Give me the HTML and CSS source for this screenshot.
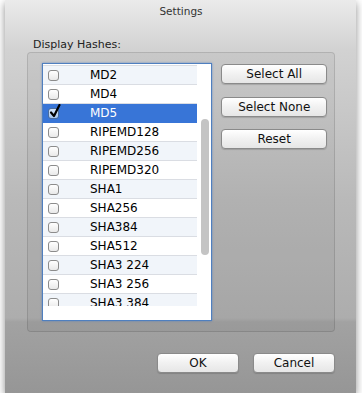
FILE: index.html
```html
<!DOCTYPE html>
<html lang="en">
<head>
  <meta charset="UTF-8">
  <title>Settings</title>
  <link rel="stylesheet" href="styles.css">
</head>
<body>
  <div class="window">
    <div class="titlebar">Settings</div>
    <div class="label">Display Hashes:</div>

    <div class="group">
      <div class="list">
        <div class="viewport">
          <div class="rows">
            <div class="row"></div>
            <div class="row alt"><span class="check"></span><span class="name">MD2</span></div>
            <div class="row"><span class="check"></span><span class="name">MD4</span></div>
            <div class="row selected">
              <span class="check checked">
                <svg viewBox="0 0 12 14" width="12" height="14"><path d="M2 8.5 L5 12 L10.5 1" fill="none" stroke="#000" stroke-width="2.2" stroke-linecap="round" stroke-linejoin="round"/></svg>
              </span>
              <span class="name">MD5</span>
            </div>
            <div class="row"><span class="check"></span><span class="name">RIPEMD128</span></div>
            <div class="row alt"><span class="check"></span><span class="name">RIPEMD256</span></div>
            <div class="row"><span class="check"></span><span class="name">RIPEMD320</span></div>
            <div class="row alt"><span class="check"></span><span class="name">SHA1</span></div>
            <div class="row"><span class="check"></span><span class="name">SHA256</span></div>
            <div class="row alt"><span class="check"></span><span class="name">SHA384</span></div>
            <div class="row"><span class="check"></span><span class="name">SHA512</span></div>
            <div class="row alt"><span class="check"></span><span class="name">SHA3 224</span></div>
            <div class="row"><span class="check"></span><span class="name">SHA3 256</span></div>
            <div class="row alt"><span class="check"></span><span class="name">SHA3 384</span></div>
          </div>
        </div>
        <div class="scroller"><div class="thumb"></div></div>
      </div>

      <div class="side-buttons">
        <button class="btn">Select All</button>
        <button class="btn">Select None</button>
        <button class="btn">Reset</button>
      </div>
    </div>

    <div class="footer">
      <button class="btn wide">OK</button>
      <button class="btn wide">Cancel</button>
    </div>
  </div>
</body>
</html>
```

FILE: styles.css
```css
* {
  box-sizing: border-box;
}

body {
  margin: 0;
  background: #ffffff;
  font-family: "DejaVu Sans", Arial, sans-serif;
  color: #111;
}

.window {
  width: 351px;
  height: 393px;
  margin-left: 5px;
  padding: 0 21px 0 22px;
  display: flex;
  flex-direction: column;
  background: linear-gradient(to bottom, #ebebeb 0px, #d2d2d2 50px, #b9b9b9 200px, #adadad 318px, #a2a2a2 322px, #969696 393px);
  box-shadow: 0 3px 8px rgba(0, 0, 0, 0.45);
}

.titlebar {
  height: 22px;
  line-height: 22px;
  text-align: center;
  font-size: 10.5px;
  color: #333;
}

.label {
  margin-top: 16px;
  height: 14px;
  line-height: 14px;
  padding-left: 6px;
  font-size: 11px;
  color: #222;
}

.group {
  height: 280px;
  display: flex;
  gap: 9px;
  padding: 11px 7px 0 15px;
  background: rgba(0, 0, 0, 0.04);
  border: 1px solid rgba(0, 0, 0, 0.12);
  border-radius: 4px;
}

.list {
  width: 171px;
  height: 258px;
  margin: -1px 0 0 -1px;
  display: flex;
  background: #ffffff;
  border: 1px solid #4f7fbf;
  box-shadow: 0 0 2px rgba(70, 120, 200, 0.7);
}

.viewport {
  flex: 1;
  height: 242px;
  overflow: hidden;
}

.rows {
  margin-top: -17px;
}

.row {
  height: 19px;
  display: flex;
  align-items: center;
  border-bottom: 1px solid #dadde3;
  background: #ffffff;
  font-size: 12px;
  color: #000;
}

.row.alt {
  background: #f1f5fa;
}

.row.selected {
  background: #3875d7;
  color: #ffffff;
  border-bottom-color: #3875d7;
}

.check {
  width: 11px;
  height: 11px;
  margin: 0 31px 0 5px;
  position: relative;
  border: 1px solid #8c8c8c;
  border-radius: 3px;
  background: linear-gradient(to bottom, #ffffff, #e9e9e9);
}

.check.checked {
  background: linear-gradient(to bottom, #d6e6fb, #a9c8f0);
  border-color: #4a6c9c;
}

.check svg {
  position: absolute;
  left: 0;
  top: -5px;
}

.name {
  white-space: nowrap;
}

.scroller {
  width: 14px;
  padding: 55px 0 0 4px;
}

.thumb {
  width: 8px;
  height: 136px;
  border-radius: 4px;
  background: #c4c4c4;
}

.side-buttons {
  width: 106px;
  display: flex;
  flex-direction: column;
  gap: 12.5px;
}

.btn {
  height: 20px;
  padding: 0;
  font-family: "DejaVu Sans", Arial, sans-serif;
  font-size: 12px;
  color: #111;
  background: linear-gradient(to bottom, #ffffff, #f1f1f1 50%, #e6e6e6);
  border: 1px solid #8a8a8a;
  border-radius: 4px;
  box-shadow: 0 1px 1px rgba(0, 0, 0, 0.15);
}

.footer {
  margin-top: 21px;
  display: flex;
  justify-content: flex-end;
  gap: 14px;
}

.btn.wide {
  width: 82px;
}
```
